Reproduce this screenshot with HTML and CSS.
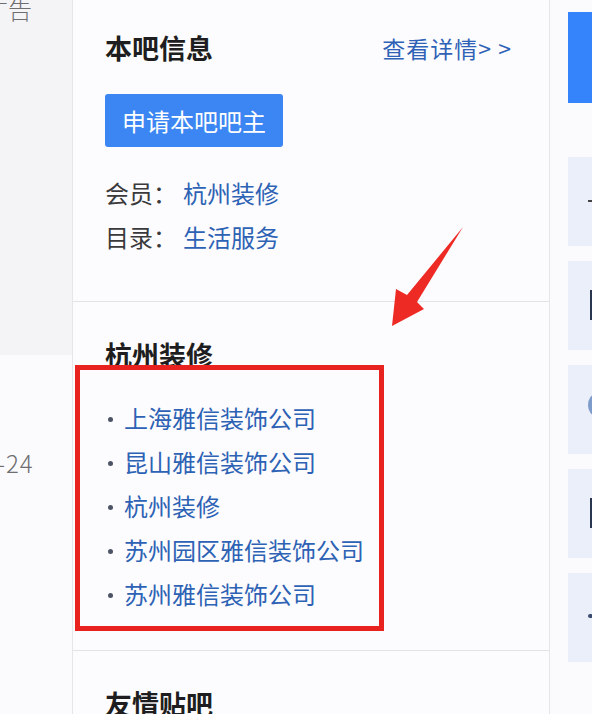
FILE: index.html
```html
<!DOCTYPE html>
<html lang="zh-CN">
  <head>
    <meta charset="UTF-8" />
    <meta name="viewport" content="width=device-width, initial-scale=1.0" />
    <title>本吧信息</title>
    <link rel="stylesheet" href="styles.css">
  </head>
  <body>
    <div class="page">
      <div class="left-col">
        <div class="ad-box">
          <div class="ad-text">广告</div>
        </div>
        <div class="post-date">-24</div>
      </div>

      <div class="aside-card">
        <div class="aside-section info-section">
          <div class="section-head">
            <h2 class="section-title">本吧信息</h2>
            <a class="more-link" href="#">查看详情&gt; &gt;</a>
          </div>
          <button class="apply-btn">申请本吧吧主</button>
          <div class="info-rows">
            <div class="info-row">会员：<a href="#">杭州装修</a></div>
            <div class="info-row">目录：<a href="#">生活服务</a></div>
          </div>
        </div>

        <div class="aside-section">
          <h2 class="section-title">杭州装修</h2>
          <ul class="link-list">
            <li><a href="#">上海雅信装饰公司</a></li>
            <li><a href="#">昆山雅信装饰公司</a></li>
            <li><a href="#">杭州装修</a></li>
            <li><a href="#">苏州园区雅信装饰公司</a></li>
            <li><a href="#">苏州雅信装饰公司</a></li>
          </ul>
        </div>

        <div class="aside-section">
          <h2 class="section-title">友情贴吧</h2>
        </div>
      </div>

      <div class="right-col">
        <div class="blue-block"></div>
        <div class="tile"><span class="frag frag-dash"></span></div>
        <div class="tile"><span class="frag frag-bar"></span></div>
        <div class="tile"><span class="frag frag-ring"></span></div>
        <div class="tile"><span class="frag frag-bar"></span></div>
        <div class="tile"><span class="frag frag-dot"></span></div>
      </div>
    </div>

    <!-- annotation drawn over the screenshot -->
    <div class="mark-box"></div>
    <svg class="mark-arrow" width="80" height="110" viewBox="388 222 80 110">
      <polygon points="463,227 417,302 424,309 392,326 396,289 407,295" fill="#ee2a24" />
    </svg>
  </body>
</html>
```

FILE: styles.css
```css
* {
  box-sizing: border-box;
}
body {
  margin: 0;
  width: 592px;
  height: 714px;
  overflow: hidden;
  position: relative;
  background: #fbfbfd;
  font-family: "Noto Sans CJK SC", "Noto Sans", sans-serif;
}
a {
  color: #2d62b4;
  text-decoration: none;
}
.page {
  display: flex;
  height: 714px;
}

/* left column (cut off) */
.left-col {
  width: 72px;
  flex-shrink: 0;
  overflow: hidden;
  color: #6e6e70;
  font-size: 24px;
  font-weight: 300;
}
.ad-box {
  height: 358px;
  background: #f4f4f7;
}
.ad-text {
  margin-left: -16px;
  line-height: 24px;
  margin-top: -3px;
  white-space: nowrap;
}
.post-date {
  margin-top: 96px;
  margin-left: -3px;
  line-height: 24px;
  letter-spacing: 1px;
}

/* middle card */
.aside-card {
  width: 478px;
  flex-shrink: 0;
  background: #fcfcfe;
  border-left: 1px solid #e6e6ea;
  border-right: 1px solid #e6e6ea;
}
.aside-section {
  padding: 35px 37px 34px 32px;
  border-top: 1px solid #e3e3e7;
}
.info-section {
  border-top: none;
  padding-top: 30px;
  padding-bottom: 42px;
}
.section-head {
  display: flex;
  justify-content: space-between;
  align-items: center;
}
.section-title {
  margin: 0;
  font-size: 27px;
  line-height: 36px;
  font-weight: 700;
  color: #1e1e20;
}
.more-link {
  font-size: 23px;
  line-height: 36px;
  color: #2f62b6;
  letter-spacing: 1px;
}
.apply-btn {
  display: block;
  margin-top: 28px;
  height: 53px;
  padding: 0 17px;
  border: none;
  border-radius: 3px;
  background: #3b86f2;
  color: #fff;
  font-family: inherit;
  font-size: 24px;
  line-height: 53px;
}
.info-rows {
  margin-top: 24px;
}
.info-row {
  font-size: 24px;
  line-height: 44px;
  color: #3a3a3c;
}
.info-row a {
  margin-left: 6px;
}
.link-list {
  list-style: none;
  margin: 23px 0 0;
  padding: 0;
}
.link-list li {
  position: relative;
  padding-left: 19px;
  font-size: 24px;
  line-height: 44px;
}
.link-list li::before {
  content: "";
  position: absolute;
  left: 3px;
  top: 21px;
  width: 5px;
  height: 5px;
  border-radius: 50%;
  background: #4d5466;
}

/* right column (cut off) */
.right-col {
  flex: 1;
  padding: 12px 0 0 18px;
  overflow: hidden;
}
.blue-block {
  height: 91px;
  background: #3584fb;
  margin-bottom: 54px;
}
.tile {
  position: relative;
  height: 89px;
  margin-bottom: 15px;
  background: #eaeff9;
}
.frag {
  position: absolute;
  display: block;
}
.frag-dash {
  left: 20px;
  top: 43px;
  width: 6px;
  height: 2px;
  background: #444;
}
.frag-bar {
  left: 22px;
  top: 29px;
  width: 3px;
  height: 30px;
  background: #2a3550;
}
.frag-ring {
  left: 20px;
  top: 29px;
  width: 16px;
  height: 22px;
  border-radius: 50%;
  background: #7d9ccc;
}
.frag-dot {
  left: 20px;
  top: 41px;
  width: 5px;
  height: 4px;
  border-radius: 2px;
  background: #3a4a70;
}

/* red annotation */
.mark-box {
  position: absolute;
  left: 75px;
  top: 365px;
  width: 309px;
  height: 266px;
  border: 5px solid #e8221e;
}
.mark-arrow {
  position: absolute;
  left: 388px;
  top: 222px;
}
```
